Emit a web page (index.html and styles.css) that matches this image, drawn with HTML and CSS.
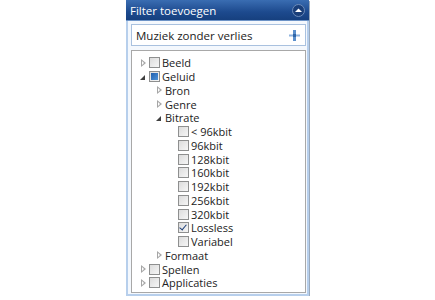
FILE: index.html
```html
<!DOCTYPE html>
<html lang="nl">
<head>
    <meta charset="UTF-8">
    <title>Filter toevoegen</title>
    <link rel="stylesheet" href="styles.css">
</head>
<body>
    <div class="panel">
        <div class="panel-header">
            <span class="panel-title">Filter toevoegen</span>
            <span class="collapse-btn">
                <svg width="9" height="6" viewBox="0 0 9 6"><path d="M1 5 L4.5 1.5 L8 5 Z" fill="#fff"/></svg>
            </span>
        </div>
        <div class="panel-body">
            <div class="search-box">
                <span>Muziek zonder verlies</span>
                <svg class="add-icon" width="11" height="11" viewBox="0 0 11 11">
                    <rect x="4" y="0" width="3" height="11" fill="#5b8fcc"/>
                    <rect x="0" y="4.5" width="11" height="2" fill="#8fb4df"/>
                    <rect x="4" y="4" width="3" height="3" fill="#2f66a8"/>
                </svg>
            </div>
            <div class="tree">
                <div class="row lvl0"><span class="arrow closed"></span><span class="check"></span>Beeld</div>
                <div class="row lvl0"><span class="arrow open"></span><span class="check partial"></span>Geluid</div>
                <div class="row lvl1"><span class="arrow closed"></span>Bron</div>
                <div class="row lvl1"><span class="arrow closed"></span>Genre</div>
                <div class="row lvl1"><span class="arrow open"></span>Bitrate</div>
                <div class="row lvl2"><span class="check"></span>&lt; 96kbit</div>
                <div class="row lvl2"><span class="check"></span>96kbit</div>
                <div class="row lvl2"><span class="check"></span>128kbit</div>
                <div class="row lvl2"><span class="check"></span>160kbit</div>
                <div class="row lvl2"><span class="check"></span>192kbit</div>
                <div class="row lvl2"><span class="check"></span>256kbit</div>
                <div class="row lvl2"><span class="check"></span>320kbit</div>
                <div class="row lvl2"><span class="check checked"></span>Lossless</div>
                <div class="row lvl2"><span class="check"></span>Variabel</div>
                <div class="row lvl1"><span class="arrow closed"></span>Formaat</div>
                <div class="row lvl0"><span class="arrow closed"></span><span class="check"></span>Spellen</div>
                <div class="row lvl0"><span class="arrow closed"></span><span class="check"></span>Applicaties</div>
            </div>
        </div>
    </div>
</body>
</html>
```

FILE: styles.css
```css
body {
    margin: 0;
    background: #fff;
    font-family: "Open Sans", "Noto Sans", sans-serif;
    font-size: 11px;
    color: #222;
}

.panel {
    margin-left: 126px;
    width: 179px;
    height: 294px;
    border: 2px solid #b7cfec;
    border-top: none;
    background: #f4f8fd;
    display: flex;
    flex-direction: column;
    box-shadow: 1px 1px 0 #9aa9bb;
}

.panel-header {
    height: 20px;
    background: linear-gradient(#3a6db2, #1d4a8e 60%, #16407f);
    border-bottom: 1px solid #6c93c7;
    display: flex;
    align-items: center;
    justify-content: space-between;
    padding: 0 4px 0 4px;
    margin: 0 -2px;
}

.panel-title {
    color: #fff;
    font-size: 11.5px;
}

.collapse-btn {
    width: 11px;
    height: 11px;
    border-radius: 50%;
    border: 1px solid #6d8cba;
    background: #1a3f7a;
    display: flex;
    align-items: center;
    justify-content: center;
}

.panel-body {
    flex: 1;
    display: flex;
    flex-direction: column;
    gap: 4px;
    padding: 3px 1px 1px 3px;
}

.search-box {
    height: 20px;
    border: 1px solid #a9c1df;
    background: #fff;
    display: flex;
    align-items: center;
    justify-content: space-between;
    padding: 0 4px 0 4px;
    font-size: 11.5px;
}

.add-icon {
    margin-right: 1px;
}

.tree {
    flex: 1;
    border: 1px solid #a8a8a8;
    background: #fff;
    padding-top: 5px;
}

.row {
    height: 13.75px;
    display: flex;
    align-items: center;
    white-space: nowrap;
}

.lvl0 { padding-left: 8px; }
.lvl1 { padding-left: 24px; }
.lvl2 { padding-left: 46px; }

.arrow {
    width: 6px;
    height: 8px;
    margin-right: 3px;
    position: relative;
}

.arrow.closed::before {
    content: "";
    position: absolute;
    left: 1px;
    top: 0;
    border-left: 5px solid #a6a6a6;
    border-top: 4px solid transparent;
    border-bottom: 4px solid transparent;
}

.arrow.closed::after {
    content: "";
    position: absolute;
    left: 2px;
    top: 2px;
    border-left: 2.5px solid #fff;
    border-top: 2px solid transparent;
    border-bottom: 2px solid transparent;
}

.arrow.open::before {
    content: "";
    position: absolute;
    left: 0;
    top: 2px;
    border-right: 5px solid #404040;
    border-top: 5px solid transparent;
}

.check {
    width: 9px;
    height: 9px;
    border: 1px solid #8e8f8f;
    background: linear-gradient(135deg, #dcdcdc, #f6f6f6);
    margin-right: 2px;
    position: relative;
    flex: none;
}

.check.partial::after {
    content: "";
    position: absolute;
    left: 1px;
    top: 1px;
    width: 7px;
    height: 7px;
    background: linear-gradient(135deg, #1f5fae, #4f93d8);
}

.check.checked::after {
    content: "";
    position: absolute;
    left: 2px;
    top: 0;
    width: 3px;
    height: 6px;
    border-right: 1.5px solid #1d3f78;
    border-bottom: 1.5px solid #1d3f78;
    transform: rotate(40deg);
}
```
